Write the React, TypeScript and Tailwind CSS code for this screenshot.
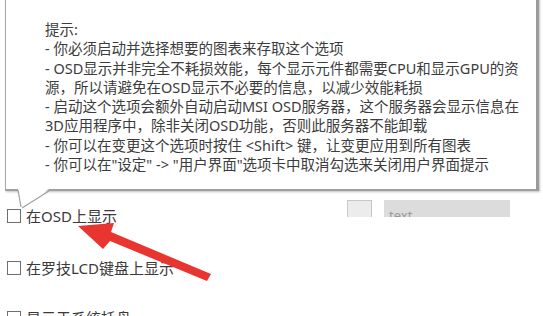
import React from "react";

const lines = [
  "提示:",
  "- 你必须启动并选择想要的图表来存取这个选项",
  "- OSD显示并非完全不耗损效能，每个显示元件都需要CPU和显示GPU的资",
  "源，所以请避免在OSD显示不必要的信息，以减少效能耗损",
  "- 启动这个选项会额外自动启动MSI OSD服务器，这个服务器会显示信息在",
  "3D应用程序中，除非关闭OSD功能，否则此服务器不能卸载",
  "- 你可以在变更这个选项时按住 <Shift> 键，让变更应用到所有图表",
  "- 你可以在\"设定\" -> \"用户界面\"选项卡中取消勾选来关闭用户界面提示",
];

function Check() {
  return <div className="w-[14px] h-[14px] border border-[#6f6f6f] bg-white shrink-0" />;
}

export default function App() {
  return (
    <div
      className="relative w-[543px] h-[316px] overflow-hidden bg-white text-[#3a3a3a]"
      style={{ fontFamily: '"Noto Sans", "Noto Sans CJK SC", sans-serif' }}
    >
      <div className="flex flex-col pt-[200px]">
        <div className="flex items-start h-[56px]">
          <div className="flex items-center gap-[5px] pl-[7px] pt-[7px]">
            <Check />
            <span className="text-[15px] leading-[18px]">在OSD上显示</span>
          </div>
          <div className="ml-auto mr-[33px] flex gap-[12px] items-start">
            <div className="w-[25px] h-[17px] border-t border-l border-r border-[#c8c8c8] bg-[#ececec]" />
            <div className="w-[126px] h-[17px] bg-[#dcdcdc] overflow-hidden relative">
              <span className="absolute left-[5px] top-[5px] text-[13px] leading-[20px] text-[#9a9a9a]">text</span>
            </div>
          </div>
        </div>
        <div className="flex items-center gap-[5px] pl-[7px] h-[24px]">
          <Check />
          <span className="text-[15px] leading-[18px]">在罗技LCD键盘上显示</span>
        </div>
        <div className="flex items-center gap-[5px] pl-[7px] mt-[26px] h-[24px]">
          <Check />
          <span className="text-[15px] leading-[18px]">显示于系统托盘</span>
        </div>
      </div>

      <div className="absolute left-[5px] top-[-10px] w-[534px] h-[201px] bg-white border border-[#a8a8a8] border-r-[3px] border-r-[#9a9a9a] border-b-[2px] border-b-[#a0a0a0] shadow-[1px_1px_2px_rgba(0,0,0,0.25)]">
        <div className="pl-[39px] pt-[29px] text-[14.5px] leading-[19.3px] text-[#3c3c3c] whitespace-nowrap">
          {lines.map((l, i) => (
            <div key={i}>{l}</div>
          ))}
        </div>
      </div>
      {/* tooltip tail */}
      <svg className="absolute left-0 top-[188px]" width="60" height="26" viewBox="0 0 60 26">
        <polygon points="18,1 49,1 23,19" fill="white" />
        <line x1="18" y1="2" x2="21" y2="19" stroke="#a0a0a0" strokeWidth="1.2" />
        <line x1="49" y1="3" x2="22" y2="20" stroke="#a0a0a0" strokeWidth="1.2" />
      </svg>

      {/* red arrow */}
      <svg className="absolute left-0 top-0" width="543" height="316" viewBox="0 0 543 316">
        <polygon points="211,274 207,281 110,241 103,249 78,226 114,223 111,232" fill="#e8352f" />
      </svg>
    </div>
  );
}
